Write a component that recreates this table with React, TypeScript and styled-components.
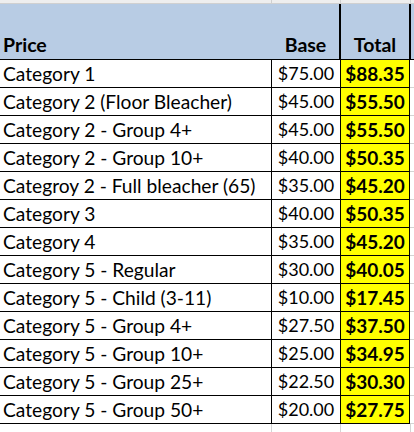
import React from "react";
import styled, { createGlobalStyle } from "styled-components";

const Global = createGlobalStyle`
  html, body { margin: 0; padding: 0; background: #ffffff; }
  body { font-family: Lato, "Liberation Sans", sans-serif; color: #000; }
  * { box-sizing: border-box; }
`;

const Sheet = styled.div`
  width: 414px;
  height: 432px;
  overflow: hidden;
  display: flex;
  flex-direction: column;
  background: #ffffff;
`;

const GridRow = styled.div<{ $h: number; $bg?: string; $line?: string }>`
  display: flex;
  height: ${(p) => p.$h}px;
  flex: none;
  background: ${(p) => p.$bg ?? "transparent"};
  border-bottom: 1px solid ${(p) => p.$line ?? "transparent"};
`;

const GhostCell = styled.div<{ $w?: number; $line?: string }>`
  width: ${(p) => (p.$w ? `${p.$w}px` : "auto")};
  flex: ${(p) => (p.$w ? "none" : "1")};
  border-right: 1px solid ${(p) => p.$line ?? "transparent"};
`;

const HeaderRow = styled.div`
  display: flex;
  height: 56px;
  flex: none;
  background: #b8cce4;
  border-bottom: 1px solid #000;
`;

const HeadCell = styled.div<{ $w?: number; $align: "left" | "center"; $thick?: boolean }>`
  width: ${(p) => (p.$w ? `${p.$w}px` : "auto")};
  flex: ${(p) => (p.$w ? "none" : "1")};
  display: flex;
  align-items: flex-end;
  justify-content: ${(p) => (p.$align === "left" ? "flex-start" : "center")};
  padding: 0 0 2px ${(p) => (p.$align === "left" ? "3px" : "0")};
  font-weight: 700;
  font-size: 19.5px;
  line-height: 24px;
  border-left: ${(p) => (p.$thick ? "2px solid #000" : "none")};
  border-right: ${(p) => (p.$thick ? "2px solid #000" : "none")};
`;

const DataRow = styled.div`
  display: flex;
  height: 28px;
  flex: none;
`;

const sizes = { name: 19.2, base: 18, total: 19 };

const Cell = styled.div<{ $w: number; $kind: "name" | "base" | "total" }>`
  width: ${(p) => p.$w}px;
  flex: none;
  display: flex;
  align-items: flex-end;
  justify-content: ${(p) => (p.$kind === "name" ? "flex-start" : "center")};
  padding: 0 0 2px ${(p) => (p.$kind === "name" ? "3px" : "0")};
  font-size: ${(p) => sizes[p.$kind]}px;
  line-height: 23px;
  white-space: nowrap;
  font-weight: ${(p) => (p.$kind === "total" ? 700 : 400)};
  background: ${(p) => (p.$kind === "total" ? "#ffff00" : "#ffffff")};
  border-right: 1px solid #000;
  border-bottom: 1px solid #000;
`;

const Filler = styled.div`
  flex: 1;
  border-bottom: 1px solid #d4d4d4;
  background: #ffffff;
`;

const rows: [string, string, string][] = [
  ["Category 1", "$75.00", "$88.35"],
  ["Category 2 (Floor Bleacher)", "$45.00", "$55.50"],
  ["Category 2 - Group 4+", "$45.00", "$55.50"],
  ["Category 2 - Group 10+", "$40.00", "$50.35"],
  ["Categroy 2 - Full bleacher (65)", "$35.00", "$45.20"],
  ["Category 3", "$40.00", "$50.35"],
  ["Category 4", "$35.00", "$45.20"],
  ["Category 5 - Regular", "$30.00", "$40.05"],
  ["Category 5 - Child (3-11)", "$10.00", "$17.45"],
  ["Category 5 - Group 4+", "$27.50", "$37.50"],
  ["Category 5 - Group 10+", "$25.00", "$34.95"],
  ["Category 5 - Group 25+", "$22.50", "$30.30"],
  ["Category 5 - Group 50+", "$20.00", "$27.75"],
];

export default function App() {
  return (
    <>
      <Global />
      <Sheet>
        <GridRow $h={4} $bg="#eeeeee" $line="#d0d0d0">
          <GhostCell $w={272} $line="#d0d0d0" />
          <GhostCell $w={69} $line="#d0d0d0" />
          <GhostCell $w={70} $line="#d0d0d0" />
          <GhostCell />
        </GridRow>
        <HeaderRow>
          <HeadCell $w={272} $align="left">Price</HeadCell>
          <HeadCell $w={67} $align="center">Base</HeadCell>
          <HeadCell $w={72} $align="center" $thick>
            Total
          </HeadCell>
          <HeadCell $align="left" />
        </HeaderRow>
        {rows.map(([name, base, total]) => (
          <DataRow key={name}>
            <Cell $w={272} $kind="name">{name}</Cell>
            <Cell $w={69} $kind="base">{base}</Cell>
            <Cell $w={69} $kind="total">{total}</Cell>
            <Filler />
          </DataRow>
        ))}
        <GridRow $h={9}>
          <GhostCell $w={272} $line="#d4d4d4" />
          <GhostCell $w={69} $line="#d4d4d4" />
          <GhostCell $w={70} $line="#d4d4d4" />
          <GhostCell />
        </GridRow>
      </Sheet>
    </>
  );
}
